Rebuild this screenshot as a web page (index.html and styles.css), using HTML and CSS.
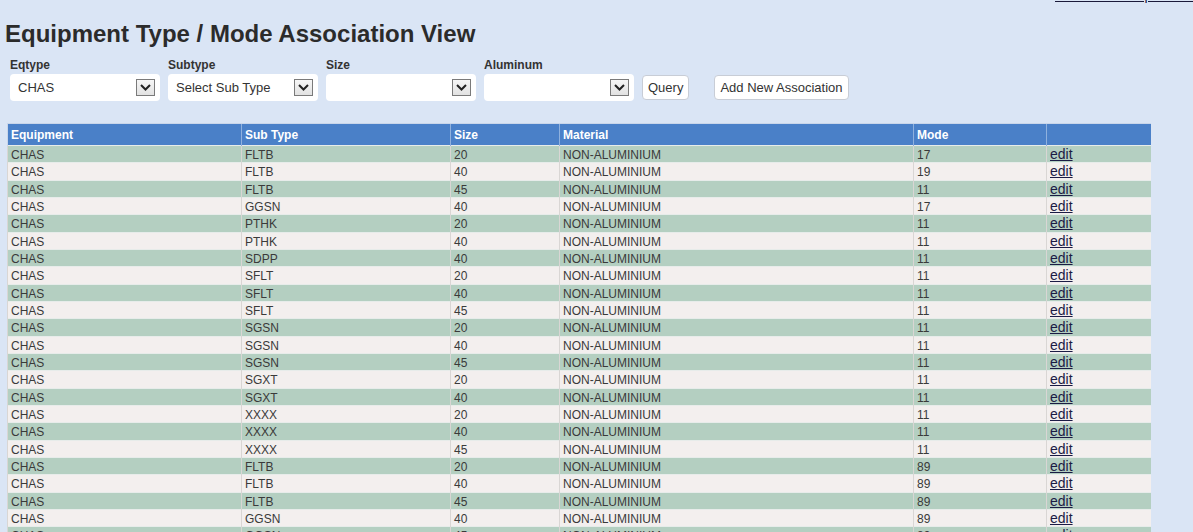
FILE: index.html
```html
<!DOCTYPE html>
<html>
<head>
<meta charset="utf-8">
<link rel="stylesheet" href="styles.css">
<title>Equipment Type / Mode Association View</title>
</head>
<body>
<div class="toplink"><a href="#">Tables and Dependencies</a></div>
<h1 class="title">Equipment Type / Mode Association View</h1>
<div class="filters">
  <div class="field">
    <label class="flabel">Eqtype</label>
    <div class="select"><span class="sval">CHAS</span><span class="arrow"><svg width="11" height="7" viewBox="0 0 11 7"><path d="M1 1 L5.5 5.5 L10 1" fill="none" stroke="#222" stroke-width="2"/></svg></span></div>
  </div>
  <div class="field">
    <label class="flabel">Subtype</label>
    <div class="select"><span class="sval">Select Sub Type</span><span class="arrow"><svg width="11" height="7" viewBox="0 0 11 7"><path d="M1 1 L5.5 5.5 L10 1" fill="none" stroke="#222" stroke-width="2"/></svg></span></div>
  </div>
  <div class="field">
    <label class="flabel">Size</label>
    <div class="select"><span class="sval"></span><span class="arrow"><svg width="11" height="7" viewBox="0 0 11 7"><path d="M1 1 L5.5 5.5 L10 1" fill="none" stroke="#222" stroke-width="2"/></svg></span></div>
  </div>
  <div class="field">
    <label class="flabel">Aluminum</label>
    <div class="select"><span class="sval"></span><span class="arrow"><svg width="11" height="7" viewBox="0 0 11 7"><path d="M1 1 L5.5 5.5 L10 1" fill="none" stroke="#222" stroke-width="2"/></svg></span></div>
  </div>
  <button class="btn">Query</button>
  <button class="btn btn-add">Add New Association</button>
</div>
<table class="grid">
  <colgroup>
    <col class="c1"><col class="c2"><col class="c3"><col class="c4"><col class="c5"><col class="c6">
  </colgroup>
  <thead>
    <tr><th>Equipment</th><th>Sub Type</th><th>Size</th><th>Material</th><th>Mode</th><th></th></tr>
  </thead>
  <tbody>
    <tr><td>CHAS</td><td>FLTB</td><td>20</td><td>NON-ALUMINIUM</td><td>17</td><td><a href="#">edit</a></td></tr>
    <tr><td>CHAS</td><td>FLTB</td><td>40</td><td>NON-ALUMINIUM</td><td>19</td><td><a href="#">edit</a></td></tr>
    <tr><td>CHAS</td><td>FLTB</td><td>45</td><td>NON-ALUMINIUM</td><td>11</td><td><a href="#">edit</a></td></tr>
    <tr><td>CHAS</td><td>GGSN</td><td>40</td><td>NON-ALUMINIUM</td><td>17</td><td><a href="#">edit</a></td></tr>
    <tr><td>CHAS</td><td>PTHK</td><td>20</td><td>NON-ALUMINIUM</td><td>11</td><td><a href="#">edit</a></td></tr>
    <tr><td>CHAS</td><td>PTHK</td><td>40</td><td>NON-ALUMINIUM</td><td>11</td><td><a href="#">edit</a></td></tr>
    <tr><td>CHAS</td><td>SDPP</td><td>40</td><td>NON-ALUMINIUM</td><td>11</td><td><a href="#">edit</a></td></tr>
    <tr><td>CHAS</td><td>SFLT</td><td>20</td><td>NON-ALUMINIUM</td><td>11</td><td><a href="#">edit</a></td></tr>
    <tr><td>CHAS</td><td>SFLT</td><td>40</td><td>NON-ALUMINIUM</td><td>11</td><td><a href="#">edit</a></td></tr>
    <tr><td>CHAS</td><td>SFLT</td><td>45</td><td>NON-ALUMINIUM</td><td>11</td><td><a href="#">edit</a></td></tr>
    <tr><td>CHAS</td><td>SGSN</td><td>20</td><td>NON-ALUMINIUM</td><td>11</td><td><a href="#">edit</a></td></tr>
    <tr><td>CHAS</td><td>SGSN</td><td>40</td><td>NON-ALUMINIUM</td><td>11</td><td><a href="#">edit</a></td></tr>
    <tr><td>CHAS</td><td>SGSN</td><td>45</td><td>NON-ALUMINIUM</td><td>11</td><td><a href="#">edit</a></td></tr>
    <tr><td>CHAS</td><td>SGXT</td><td>20</td><td>NON-ALUMINIUM</td><td>11</td><td><a href="#">edit</a></td></tr>
    <tr><td>CHAS</td><td>SGXT</td><td>40</td><td>NON-ALUMINIUM</td><td>11</td><td><a href="#">edit</a></td></tr>
    <tr><td>CHAS</td><td>XXXX</td><td>20</td><td>NON-ALUMINIUM</td><td>11</td><td><a href="#">edit</a></td></tr>
    <tr><td>CHAS</td><td>XXXX</td><td>40</td><td>NON-ALUMINIUM</td><td>11</td><td><a href="#">edit</a></td></tr>
    <tr><td>CHAS</td><td>XXXX</td><td>45</td><td>NON-ALUMINIUM</td><td>11</td><td><a href="#">edit</a></td></tr>
    <tr><td>CHAS</td><td>FLTB</td><td>20</td><td>NON-ALUMINIUM</td><td>89</td><td><a href="#">edit</a></td></tr>
    <tr><td>CHAS</td><td>FLTB</td><td>40</td><td>NON-ALUMINIUM</td><td>89</td><td><a href="#">edit</a></td></tr>
    <tr><td>CHAS</td><td>FLTB</td><td>45</td><td>NON-ALUMINIUM</td><td>89</td><td><a href="#">edit</a></td></tr>
    <tr><td>CHAS</td><td>GGSN</td><td>40</td><td>NON-ALUMINIUM</td><td>89</td><td><a href="#">edit</a></td></tr>
    <tr><td>CHAS</td><td>GGSN</td><td>45</td><td>NON-ALUMINIUM</td><td>89</td><td><a href="#">edit</a></td></tr>
  </tbody>
</table>
</body>
</html>
```
FILE: styles.css
```css
html, body {
  margin: 0;
  padding: 0;
  background: #dae5f5;
  overflow: hidden;
}
body {
  font-family: "Liberation Sans", Arial, sans-serif;
  color: #333;
}
.toplink {
  height: 3px;
  overflow: hidden;
  padding-left: 1055px;
  white-space: nowrap;
}
.toplink a {
  display: block;
  margin-top: -13px;
  font-size: 14px;
  line-height: 16px;
  color: #1a1a3a;
}
.title {
  margin: 17px 0 0 5px;
  font-size: 24px;
  line-height: 28px;
  font-weight: bold;
  color: #2b2b2b;
}
.filters {
  display: flex;
  align-items: flex-end;
  margin: 10px 0 0 10px;
}
.field {
  display: flex;
  flex-direction: column;
  width: 150px;
  margin-right: 8px;
}
.flabel {
  font-size: 12px;
  line-height: 14px;
  font-weight: bold;
  color: #333;
  margin-bottom: 2px;
}
.select {
  height: 27px;
  background: #fff;
  border-radius: 4px;
  display: flex;
  align-items: center;
  justify-content: space-between;
  padding: 0 5px 0 8px;
  box-sizing: border-box;
}
.sval {
  font-size: 13px;
  color: #333;
}
.arrow {
  width: 19px;
  height: 17px;
  box-sizing: border-box;
  border: 1px solid #7a7a7a;
  background: linear-gradient(#f6f6f6, #e2e2e2);
  display: flex;
  align-items: center;
  justify-content: center;
}
.btn {
  font-family: "Liberation Sans", Arial, sans-serif;
  font-size: 13px;
  color: #333;
  background: #fff;
  border: 1px solid #c8cdd6;
  border-radius: 4px;
  height: 25px;
  padding: 0 5px;
  margin-bottom: 1px;
}
.btn-add {
  margin-left: 25px;
}
.grid {
  margin: 22px 0 0 7px;
  width: 1143px;
  border-collapse: collapse;
  table-layout: fixed;
  font-size: 12px;
}
.c1 { width: 234px; }
.c2 { width: 209px; }
.c3 { width: 109px; }
.c4 { width: 354px; }
.c5 { width: 133px; }
.c6 { width: 104px; }
.grid th {
  background: #4a80c8;
  color: #fff;
  text-align: left;
  font-weight: bold;
  height: 21px;
  padding: 0 3px;
  border-left: 1px solid #8fb1de;
  border-top: 1px solid #c9d6ea;
}
.grid th:first-child { border-left: 1px solid #c9d6ea; }
.grid td {
  height: 13.33px;
  padding: 3px 3px 0;
  color: #3a3a3a;
  border-left: 1px solid #d9d6d4;
  border-top: 1px solid #e7ecea;
  line-height: 13px;
  white-space: nowrap;
}
.grid tbody tr:nth-child(odd) td { background: #b4cfc1; }
.grid tbody tr:nth-child(even) td { background: #f3efee; }
.grid td a {
  font-size: 14px;
  line-height: 10px;
  color: #1b1b45;
  text-decoration: underline;
}
```
